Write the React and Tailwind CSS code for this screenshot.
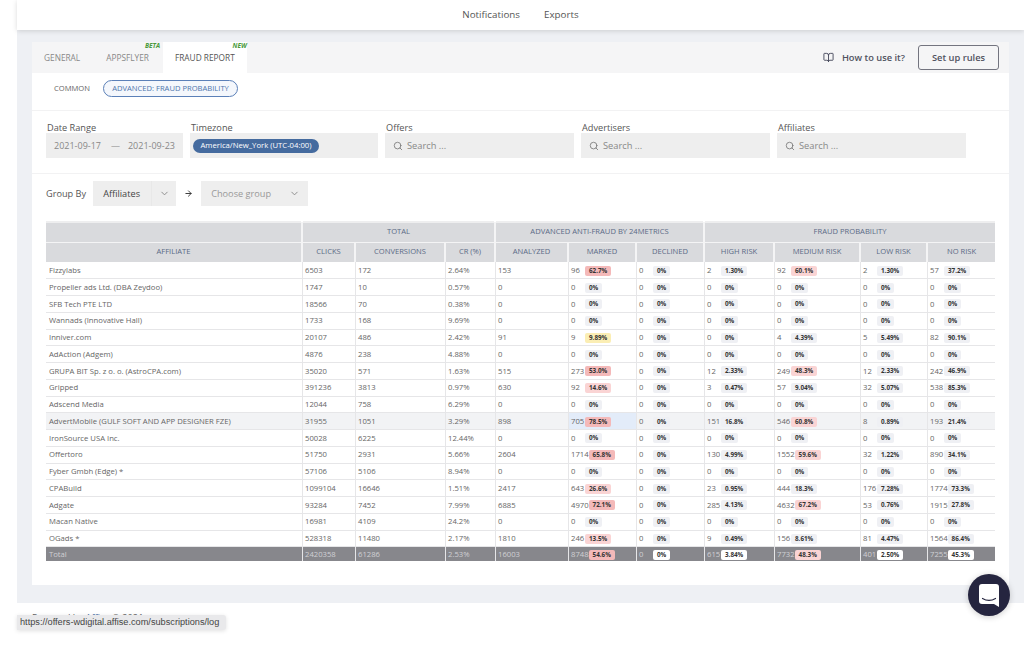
import { ArrowRight, BookOpen, ChevronDown, Search } from "lucide-react";

const rows = [
  ["Fizzylabs", "6503", "172", "2.64%", "153", [96, "62.7%", "r"], [2, "1.30%"], [92, "60.1%", "p"], [2, "1.30%"], [57, "37.2%"]],
  ["Propeller ads Ltd. (DBA Zeydoo)", "1747", "10", "0.57%", "0"],
  ["SFB Tech PTE LTD", "18566", "70", "0.38%", "0"],
  ["Wannads (Innovative Hall)", "1733", "168", "9.69%", "0"],
  ["Inniver.com", "20107", "486", "2.42%", "91", [9, "9.89%", "y"], [0, "0%"], [4, "4.39%"], [5, "5.49%"], [82, "90.1%"]],
  ["AdAction (Adgem)", "4876", "238", "4.88%", "0"],
  ["GRUPA BIT Sp. z o. o. (AstroCPA.com)", "35020", "571", "1.63%", "515", [273, "53.0%", "r"], [12, "2.33%"], [249, "48.3%", "p"], [12, "2.33%"], [242, "46.9%"]],
  ["Gripped", "391236", "3813", "0.97%", "630", [92, "14.6%", "p"], [3, "0.47%"], [57, "9.04%"], [32, "5.07%"], [538, "85.3%"]],
  ["Adscend Media", "12044", "758", "6.29%", "0"],
  ["AdvertMobile (GULF SOFT AND APP DESIGNER FZE)", "31955", "1051", "3.29%", "898", [705, "78.5%", "r"], [151, "16.8%"], [546, "60.8%", "p"], [8, "0.89%"], [193, "21.4%"]],
  ["IronSource USA Inc.", "50028", "6225", "12.44%", "0"],
  ["Offertoro", "51750", "2931", "5.66%", "2604", [1714, "65.8%", "r"], [130, "4.99%"], [1552, "59.6%", "p"], [32, "1.22%"], [890, "34.1%"]],
  ["Fyber Gmbh (Edge) *", "57106", "5106", "8.94%", "0"],
  ["CPABuild", "1099104", "16646", "1.51%", "2417", [643, "26.6%", "p"], [23, "0.95%"], [444, "18.3%"], [176, "7.28%"], [1774, "73.3%"]],
  ["Adgate", "93284", "7452", "7.99%", "6885", [4970, "72.1%", "r"], [285, "4.13%"], [4632, "67.2%", "p"], [53, "0.76%"], [1915, "27.8%"]],
  ["Macan Native", "16981", "4109", "24.2%", "0"],
  ["OGads *", "528318", "11480", "2.17%", "1810", [246, "13.5%", "p"], [9, "0.49%"], [156, "8.61%"], [81, "4.47%"], [1564, "86.4%"]],
];

const badgeColors = {
  r: "bg-[#f4b9b9]",
  p: "bg-[#fad4d4]",
  y: "bg-[#fbeeb4]",
  g: "bg-[#eff0f4]",
  w: "bg-white",
};

function Stat({ value, pct, tone = "g" }) {
  return (
    <div className="flex items-center">
      <span className="min-w-[14px]">{value}</span>
      <span className={`h-[10px] rounded-[2px] px-[4px] text-[6.3px] font-bold leading-[10px] text-[#333] ${badgeColors[tone]}`}>
        {pct}
      </span>
    </div>
  );
}

function Th({ children, colSpan }) {
  return (
    <th colSpan={colSpan} className="border-l-2 border-white/70 text-center text-[7.6px] font-normal text-[#5c6a86] first:border-l-0">
      {children}
    </th>
  );
}

function Td({ children, className = "" }) {
  return <td className={`border-l border-[#e6e6e8] pl-[2.5px] pt-px first:border-l-0 first:pl-[3px] ${className}`}>{children}</td>;
}

function Field({ label, width, children }) {
  return (
    <div className={width}>
      <div className="h-[13px] pl-px text-[9.2px] leading-[15px] text-[#555]">{label}</div>
      <div className="flex h-[25px] items-center bg-[#eeeeee] text-[9.3px]">{children}</div>
    </div>
  );
}

function SearchField({ label }) {
  return (
    <Field label={label} width="w-[189px]">
      <Search size={10} className="ml-2 text-[#777]" />
      <span className="ml-[4px] text-[#888]">Search ...</span>
    </Field>
  );
}

export default function App() {
  const zero = [0, "0%"];
  return (
    <div className="relative h-[649px] w-[1024px] overflow-hidden bg-white font-['Open_Sans',sans-serif] text-[#666]">
      <div className="pl-[17px]">
        <div className="relative z-10 flex h-[30px] items-center justify-center gap-6 bg-white text-[9.8px] text-[#555] shadow-[0_1px_5px_rgba(0,0,0,0.15)]">
          <span>Notifications</span>
          <span>Exports</span>
        </div>

        <div className="bg-[#eef0f4] pb-[18px] pl-[15px] pr-[15px] pt-[12px]">
          <div className="h-[543px] bg-white">
            {/* Tabs */}
            <div className="flex h-[31px] items-center bg-[#f5f5f6] pr-[10px] text-[8.3px] text-[#888]">
              <div className="flex h-full items-center px-3 pt-[2px]">GENERAL</div>
              <div className="relative ml-[2px] flex h-full items-center px-3 pt-[2px]">
                APPSFLYER
                <span className="absolute right-[1px] top-0 text-[6.5px] font-bold italic leading-[7px] text-[#4a9a3c]">BETA</span>
              </div>
              <div className="relative ml-[2px] flex h-full items-center bg-white px-3 pt-[2px] text-[#555]">
                FRAUD REPORT
                <span className="absolute right-0 top-0 text-[6.5px] font-bold italic leading-[7px] text-[#4a9a3c]">NEW</span>
              </div>
              <BookOpen size={11} className="ml-auto text-[#44465a]" />
              <span className="ml-2 pt-px text-[9.3px] font-semibold text-[#50525f]">How to use it?</span>
              <button className="ml-[13px] h-[25px] w-[81px] rounded-[3px] border border-[#73747f] text-[9.3px] font-semibold text-[#50525f]">
                Set up rules
              </button>
            </div>

            {/* Sub tabs */}
            <div className="flex h-[38px] items-center border-b border-[#f2f2f3] pb-[6px] pl-[22px] text-[7.6px]">
              <span className="text-[#666]">COMMON</span>
              <span className="ml-[13px] flex h-[17px] w-[135px] items-center justify-center rounded-full border border-[#5b80b8] bg-[#f4f7fc] text-[#4f76ad]">
                ADVANCED: FRAUD PROBABILITY
              </span>
            </div>

            {/* Filters */}
            <div className="flex h-[63px] gap-[7px] border-b border-[#f2f2f3] pl-[14px] pt-[9px]">
              <Field label="Date Range" width="w-[137px]">
                <span className="ml-2 text-[9px] text-[#888]">2021-09-17</span>
                <span className="ml-[10px] text-[9px] text-[#888]">—</span>
                <span className="ml-[8px] text-[9px] text-[#888]">2021-09-23</span>
              </Field>
              <Field label="Timezone" width="w-[188px]">
                <span className="ml-[3px] flex h-[14px] w-[126px] items-center justify-center rounded-full bg-[#456b9f] text-[7.7px] text-white">
                  America/New_York (UTC-04:00)
                </span>
              </Field>
              <SearchField label="Offers" />
              <SearchField label="Advertisers" />
              <SearchField label="Affiliates" />
            </div>

            {/* Group by */}
            <div className="flex h-[47px] items-start pl-[14px] pt-[7px] text-[9.2px]">
              <span className="flex h-[25px] items-center text-[#555]">Group By</span>
              <div className="ml-[7px] flex h-[25px] w-[83px] items-center bg-[#eeeeee] pl-[10px] text-[#444]">
                Affiliates
                <div className="ml-auto flex h-full w-[25px] items-center justify-center border-l border-[#e8e8e8]">
                  <ChevronDown size={11} className="text-[#888]" />
                </div>
              </div>
              <ArrowRight size={9} strokeWidth={2.5} className="ml-[8px] mt-[8px] text-[#333]" />
              <div className="ml-[8px] flex h-[25px] w-[107px] items-center bg-[#eeeeee] pl-[10px] text-[#999]">
                Choose group
                <ChevronDown size={11} className="ml-auto mr-2 text-[#888]" />
              </div>
            </div>

            {/* Table */}
            <div className="pl-[14px]">
              <table className="w-[949px] table-fixed border-collapse border-t-2 border-[#eeeeef] text-[7.7px] leading-none">
                <colgroup>
                  <col className="w-[256px]" />
                  <col className="w-[53px]" />
                  <col className="w-[90px]" />
                  <col className="w-[50px]" />
                  <col className="w-[73px]" />
                  <col className="w-[68px]" />
                  <col className="w-[68px]" />
                  <col className="w-[70px]" />
                  <col className="w-[86px]" />
                  <col className="w-[67px]" />
                  <col className="w-[68px]" />
                </colgroup>
                <thead>
                  <tr className="h-[20px] border-b border-white/70 bg-[#d9dadd]">
                    <Th />
                    <Th colSpan={3}>TOTAL</Th>
                    <Th colSpan={3}>ADVANCED ANTI-FRAUD BY 24METRICS</Th>
                    <Th colSpan={4}>FRAUD PROBABILITY</Th>
                  </tr>
                  <tr className="h-[20px] bg-[#d9dadd]">
                    <Th>AFFILIATE</Th>
                    <Th>CLICKS</Th>
                    <Th>CONVERSIONS</Th>
                    <Th>CR (%)</Th>
                    <Th>ANALYZED</Th>
                    <Th>MARKED</Th>
                    <Th>DECLINED</Th>
                    <Th>HIGH RISK</Th>
                    <Th>MEDIUM RISK</Th>
                    <Th>LOW RISK</Th>
                    <Th>NO RISK</Th>
                  </tr>
                </thead>
                <tbody>
                  {rows.map((row, i) => {
                    const [name, clicks, conv, cr, analyzed, marked = zero, high = zero, medium = zero, low = zero, none = zero] = row;
                    const active = name.startsWith("AdvertMobile");
                    return (
                      <tr key={i} className={`h-[16.76px] border-b border-[#e6e6e8] ${active ? "bg-[#f2f3f5]" : ""}`}>
                        <Td>{name}</Td>
                        <Td>{clicks}</Td>
                        <Td>{conv}</Td>
                        <Td>{cr}</Td>
                        <Td>{analyzed}</Td>
                        <Td className={active ? "bg-[#e3ecf9]" : ""}>
                          <Stat value={marked[0]} pct={marked[1]} tone={marked[2]} />
                        </Td>
                        <Td><Stat value={0} pct="0%" /></Td>
                        <Td><Stat value={high[0]} pct={high[1]} /></Td>
                        <Td><Stat value={medium[0]} pct={medium[1]} tone={medium[2]} /></Td>
                        <Td><Stat value={low[0]} pct={low[1]} /></Td>
                        <Td><Stat value={none[0]} pct={none[1]} /></Td>
                      </tr>
                    );
                  })}
                  <tr className="h-[14px] bg-[#87878c] text-[#d0d0d4]">
                    <Td>Total</Td>
                    <Td>2420358</Td>
                    <Td>61286</Td>
                    <Td>2.53%</Td>
                    <Td>16003</Td>
                    <Td><Stat value={8748} pct="54.6%" tone="r" /></Td>
                    <Td><Stat value={0} pct="0%" tone="w" /></Td>
                    <Td><Stat value={615} pct="3.84%" tone="w" /></Td>
                    <Td><Stat value={7732} pct="48.3%" tone="p" /></Td>
                    <Td><Stat value={401} pct="2.50%" tone="w" /></Td>
                    <Td><Stat value={7255} pct="45.3%" tone="w" /></Td>
                  </tr>
                </tbody>
              </table>
            </div>
          </div>
        </div>

        <div className="pl-[15px] pt-[8px] text-[9.3px] leading-[14px] text-[#666]">
          Powered by <span className="text-[#4f76ad]">Affise</span> © 2021
        </div>
      </div>

      {/* Browser status bubble */}
      <div className="absolute left-[17px] top-[615px] h-[15px] w-[209px] whitespace-nowrap rounded-r-[3px] bg-[#e9e9eb] pl-[3px] font-['Liberation_Sans',sans-serif] text-[9.2px] leading-[15px] text-[#444] shadow-[0_1px_4px_rgba(0,0,0,0.12)]">
        https://offers-wdigital.affise.com/subscriptions/log
      </div>

      {/* Chat launcher */}
      <div className="absolute left-[968px] top-[574px] flex h-[42px] w-[42px] items-center justify-center rounded-full bg-[#25253f] shadow-[0_1px_6px_rgba(0,0,0,0.2)]">
        <svg width="20" height="23" viewBox="0 0 20 23" fill="none">
          <path d="M3 0h14a3 3 0 0 1 3 3v20l-5-3H3a3 3 0 0 1-3-3V3a3 3 0 0 1 3-3z" fill="#fff" />
          <path d="M3.5 14.5c4 2.4 9 2.4 13 0" stroke="#25253f" strokeWidth="1.2" strokeLinecap="round" />
        </svg>
      </div>
    </div>
  );
}
